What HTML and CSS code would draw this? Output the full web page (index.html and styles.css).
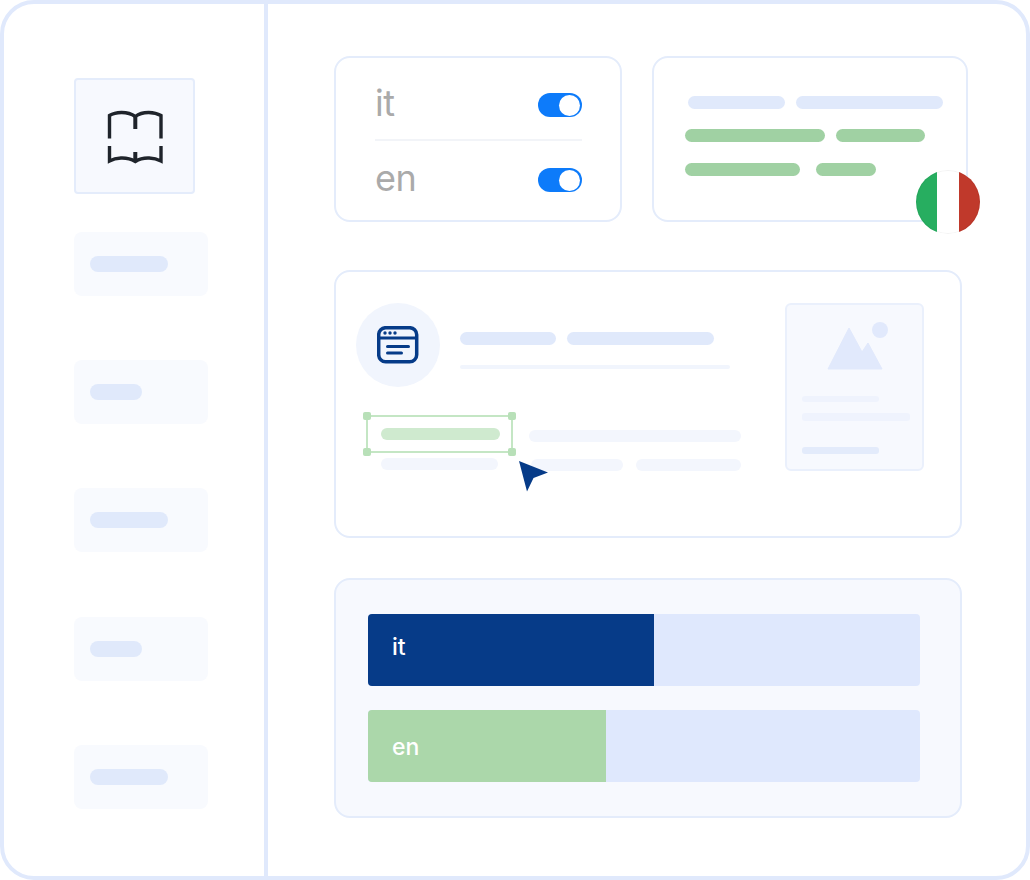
FILE: index.html
```html
<!DOCTYPE html>
<html lang="en">
  <head>
    <meta charset="UTF-8" />
    <title>Translations</title>
    <link rel="stylesheet" href="styles.css">
  </head>
  <body>
    <div class="frame">
      <aside class="sidebar">
        <div class="logo-box">
          <svg width="57" height="54" viewBox="107 110 57 54" fill="none" stroke="#1f242b" stroke-width="3.400">
            <path d="M109.500 138.500V115.500C115 112 127 110.500 135.300 116.500C143 110.500 155 112 161 115.500V138.500" />
            <path d="M135.300 117V129" stroke-width="4" />
            <path d="M109.500 146V161C115 158 126 156 135.300 161.500C144 156 155 158 161 161V146" />
            <path d="M135.300 152V161" stroke-width="4" />
          </svg>
        </div>
        <div class="side-item"><span class="side-pill"></span></div>
        <div class="side-item"><span class="side-pill short"></span></div>
        <div class="side-item"><span class="side-pill"></span></div>
        <div class="side-item nudge"><span class="side-pill short"></span></div>
        <div class="side-item"><span class="side-pill"></span></div>
      </aside>

      <main class="content">
        <div class="top-row">
          <section class="card lang-card">
            <div class="lang-row">
              <span class="lang-name">it</span>
              <span class="toggle"><span class="knob"></span></span>
            </div>
            <div class="lang-row second">
              <span class="lang-name">en</span>
              <span class="toggle"><span class="knob"></span></span>
            </div>
          </section>

          <section class="card text-card">
            <div class="line-row first">
              <span class="pill blue" style="width: 97px"></span>
              <span class="pill blue" style="width: 147px"></span>
            </div>
            <div class="line-row">
              <span class="pill green" style="width: 140px"></span>
              <span class="pill green" style="width: 89px"></span>
            </div>
            <div class="line-row wide-gap">
              <span class="pill green" style="width: 115px"></span>
              <span class="pill green" style="width: 60px"></span>
            </div>
            <div class="flag">
              <span class="flag-green"></span>
              <span class="flag-white"></span>
              <span class="flag-red"></span>
            </div>
          </section>
        </div>

        <section class="card editor-card">
          <div class="editor-left">
            <div class="editor-head">
              <div class="icon-circle">
                <svg width="42" height="38" viewBox="377 326 42 38" fill="none" stroke="#063b88" stroke-width="3.500" stroke-linecap="round">
                  <rect x="378.700" y="327.700" width="38" height="34" rx="7" />
                  <path d="M379 338H416" stroke-width="3" />
                  <path d="M387.500 346.500H408.500" stroke-width="3" />
                  <path d="M387.500 353H401.500" stroke-width="3" />
                  <circle cx="385" cy="333" r="1.700" fill="#063b88" stroke="none" />
                  <circle cx="390" cy="333" r="1.700" fill="#063b88" stroke="none" />
                  <circle cx="395" cy="333" r="1.700" fill="#063b88" stroke="none" />
                </svg>
              </div>
              <div class="head-lines">
                <div class="line-row">
                  <span class="pill blue" style="width: 96px"></span>
                  <span class="pill blue" style="width: 147px"></span>
                </div>
                <span class="thin-line"></span>
              </div>
            </div>

            <div class="field-rows">
              <div class="field-col">
                <div class="selection">
                  <span class="pill light-green"></span>
                  <i class="handle tl"></i>
                  <i class="handle tr"></i>
                  <i class="handle bl"></i>
                  <i class="handle br"></i>
                </div>
                <span class="pill faint under"></span>
              </div>
              <div class="field-col right">
                <span class="pill faint full"></span>
                <div class="under-pair">
                  <span class="pill faint" style="width: 92px"></span>
                  <span class="pill faint" style="width: 105px"></span>
                </div>
              </div>
            </div>

            <svg class="cursor" width="30" height="32" viewBox="518 460 30 32">
              <path d="M519 461L548 472.500L533.500 478L527 491.500Z" fill="#063b88" />
            </svg>
          </div>

          <div class="image-card">
            <svg class="mountain" width="62" height="48" viewBox="826 322 62 48">
              <path d="M849 328L862 352L868 343L882 369H828Z" fill="#e1e9fc" stroke="#e1e9fc" stroke-linejoin="round" />
              <circle cx="880" cy="330" r="8" fill="#e1e9fc" />
            </svg>
            <span class="img-line first" style="width: 77px"></span>
            <span class="img-line tall" style="width: 108px"></span>
            <span class="img-line dark" style="width: 77px"></span>
          </div>
        </section>

        <section class="card stats-card">
          <div class="bar">
            <div class="bar-fill navy" style="width: 286px"><span class="bar-label raised">it</span></div>
          </div>
          <div class="bar">
            <div class="bar-fill mint" style="width: 238px"><span class="bar-label lowered">en</span></div>
          </div>
        </section>
      </main>
    </div>
  </body>
</html>
```

FILE: styles.css
```css
* {
  margin: 0;
  box-sizing: border-box;
}
body {
  background-color: #fff;
  font-family: "Inter", sans-serif;
}
.frame {
  display: flex;
  width: 1030px;
  height: 880px;
  border: 4px solid #e0e9fc;
  border-radius: 34px;
  overflow: hidden;
}

.sidebar {
  display: flex;
  flex-direction: column;
  width: 264px;
  flex-shrink: 0;
  padding: 74px 0 0 70px;
  border-right: 4px solid #e0e9fc;
}
.logo-box {
  display: flex;
  justify-content: center;
  align-items: center;
  width: 121px;
  height: 116px;
  margin-bottom: 38px;
  padding: 2px 0 0 2px;
  background-color: #f7f9fe;
  border: 2px solid #e4ecfb;
  border-radius: 4px;
}
.side-item {
  display: flex;
  flex-shrink: 0;
  align-items: center;
  width: 134px;
  height: 64px;
  margin-bottom: 64px;
  padding-left: 16px;
  background-color: #f8fafe;
  border-radius: 8px;
}
.side-item.nudge {
  margin-top: 1px;
}
.side-pill {
  width: 78px;
  height: 16px;
  background-color: #e0e9fb;
  border-radius: 8px;
}
.side-pill.short {
  width: 52px;
}

.content {
  flex: 1;
  padding: 52px 0 0 66px;
}
.card {
  background-color: #fff;
  border: 2px solid #e4ecfb;
  border-radius: 16px;
}
.top-row {
  display: flex;
  gap: 30px;
  margin-bottom: 48px;
}

.lang-card {
  width: 288px;
  height: 166px;
  padding: 0 38px 0 39px;
}
.lang-row {
  display: flex;
  justify-content: space-between;
  align-items: center;
  height: 83px;
  padding-top: 13px;
  border-bottom: 2px solid #f2f4f8;
}
.lang-row.second {
  height: 78px;
  padding-top: 0;
  border-bottom: none;
}
.lang-name {
  margin-top: -4px;
  font-size: 36px;
  line-height: 40px;
  letter-spacing: -0.5px;
  color: #aaaaaa;
}
.toggle {
  display: flex;
  justify-content: flex-end;
  align-items: center;
  width: 44px;
  height: 24px;
  padding-right: 2px;
  background-color: #0d7bfa;
  border-radius: 12px;
}
.knob {
  width: 21px;
  height: 21px;
  background-color: #fff;
  border-radius: 50%;
}

.text-card {
  position: relative;
  width: 316px;
  height: 166px;
  padding: 20px 0 0 31px;
}
.line-row {
  display: flex;
  gap: 11px;
  margin-top: 20px;
}
.line-row.first {
  margin: 18px 0 0 3px;
}
.line-row.wide-gap {
  gap: 16px;
  margin-top: 21px;
}
.pill {
  display: block;
  height: 13px;
  border-radius: 7px;
}
.pill.blue {
  background-color: #e0e9fb;
}
.pill.green {
  background-color: #a0d1a3;
}
.pill.faint {
  height: 12px;
  background-color: #f3f6fd;
}
.pill.light-green {
  width: 119px;
  height: 12px;
  background-color: #cfeacf;
}
.flag {
  position: absolute;
  top: 112px;
  left: 262px;
  display: flex;
  width: 64px;
  height: 64px;
  border-radius: 50%;
  overflow: hidden;
}
.flag::after {
  content: "";
  position: absolute;
  inset: 0;
  border-radius: 50%;
  box-shadow: inset 0 0 0 1px rgba(0, 0, 0, 0.05);
}
.flag span {
  height: 100%;
}
.flag-green {
  width: 21px;
  background-color: #27ae60;
}
.flag-white {
  width: 22px;
  background-color: #fff;
}
.flag-red {
  width: 21px;
  background-color: #c0392b;
}

.editor-card {
  display: flex;
  justify-content: space-between;
  width: 628px;
  height: 268px;
  margin-bottom: 40px;
  padding: 31px 36px 0 20px;
}
.editor-left {
  position: relative;
  width: 386px;
}
.editor-head {
  display: flex;
  align-items: center;
  gap: 20px;
}
.icon-circle {
  display: flex;
  justify-content: center;
  align-items: center;
  width: 84px;
  height: 84px;
  flex-shrink: 0;
  background-color: #f1f5fd;
  border-radius: 50%;
}
.head-lines {
  width: 270px;
  padding-top: 10px;
}
.head-lines .line-row {
  margin-top: 0;
}
.thin-line {
  display: block;
  height: 4px;
  margin-top: 20px;
  background-color: #f1f5fd;
  border-radius: 2px;
}
.field-rows {
  display: flex;
  gap: 16px;
  margin-top: 28px;
}
.field-col {
  width: 147px;
}
.field-col.right {
  width: 212px;
  margin-left: 10px;
  padding-top: 15px;
}
.selection {
  position: relative;
  display: flex;
  align-items: center;
  width: 147px;
  height: 38px;
  margin-left: 10px;
  padding-left: 13px;
  border: 2px solid #c4e6c4;
}
.handle {
  position: absolute;
  width: 8px;
  height: 8px;
  background-color: #b8e0b8;
  border-radius: 2px;
}
.handle.tl {
  top: -5px;
  left: -5px;
}
.handle.tr {
  top: -5px;
  right: -5px;
}
.handle.bl {
  bottom: -5px;
  left: -5px;
}
.handle.br {
  bottom: -5px;
  right: -5px;
}
.pill.under {
  width: 117px;
  margin: 5px 0 0 25px;
}
.pill.full {
  width: 212px;
}
.under-pair {
  display: flex;
  gap: 13px;
  margin-top: 17px;
  padding-left: 2px;
}
.cursor {
  position: absolute;
  top: 157px;
  left: 162px;
}

.image-card {
  width: 139px;
  height: 168px;
  padding: 17px 15px 0;
  background-color: #f7f9fe;
  border: 2px solid #eaf0fc;
  border-radius: 6px;
}
.mountain {
  display: block;
  margin: 0 0 0 24px;
}
.img-line {
  display: block;
  height: 6px;
  background-color: #eff3fd;
  border-radius: 3px;
}
.img-line.first {
  margin-top: 26px;
}
.img-line.tall {
  height: 8px;
  margin-top: 11px;
}
.img-line.dark {
  height: 7px;
  margin-top: 26px;
  background-color: #e3ebfb;
}

.stats-card {
  width: 628px;
  height: 240px;
  padding: 34px 0 0 32px;
  background-color: #f7f9fe;
}
.bar {
  width: 552px;
  height: 72px;
  margin-bottom: 24px;
  background-color: #dfe8fd;
  border-radius: 4px;
  overflow: hidden;
}
.bar-fill {
  display: flex;
  align-items: center;
  height: 100%;
  padding-left: 24px;
  font-size: 23px;
  font-weight: 500;
  color: #fff;
}
.bar-fill.navy {
  background-color: #063b88;
}
.bar-fill.mint {
  background-color: #abd7aa;
}
.bar-label.raised {
  margin-top: -6px;
}
.bar-label.lowered {
  margin-top: 2px;
}
```
